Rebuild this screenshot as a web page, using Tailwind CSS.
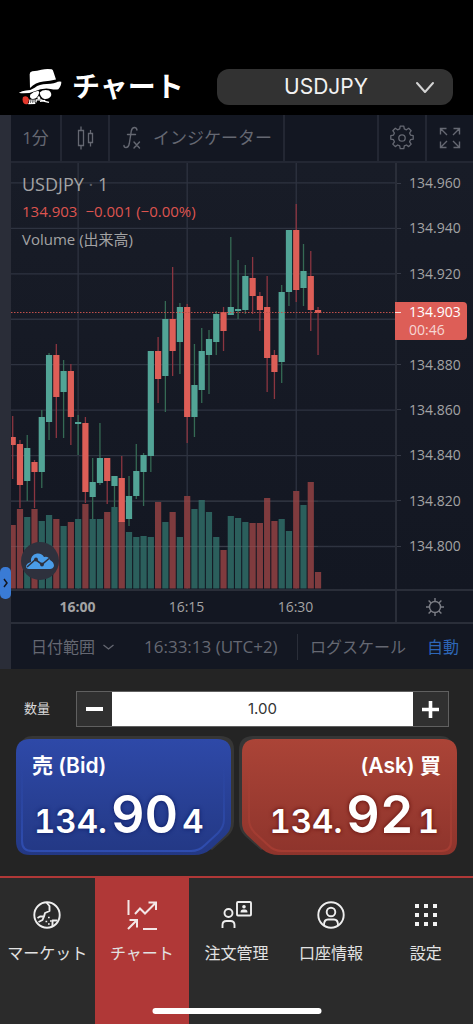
<!DOCTYPE html>
<html lang="ja">
<head>
<meta charset="utf-8">
<meta name="viewport" content="width=device-width, initial-scale=1">
<title>チャート - USDJPY</title>
<script src="https://cdn.jsdelivr.net/npm/@tailwindcss/browser@4"></script>
</head>
<body class="flex min-h-screen flex-col bg-black font-['Inter','Noto_Sans_CJK_JP',sans-serif] text-white">

<header class="flex items-center bg-black pt-[69px] pr-5 pb-[10px] pl-[19px]">
  <svg class="h-9 w-[43px] shrink-0" viewBox="57 56 129 112" preserveAspectRatio="none" aria-hidden="true">
    <path fill="#fff" d="M90 115 L89 72 Q89 65 97 63 Q112 62 124 58 Q140 55 155 57 Q159 58 160 64 L168 89 Q150 94 130 95 Q106 98 90 115Z"/>
    <path fill="#fff" d="M57 130 Q66 124 78 123 Q92 123 104 114 Q118 104 140 103 Q166 102 173 96 Q180 94 184 96 Q184 110 175 119 Q166 121 152 118 Q128 114 104 125 Q84 134 58 131Z"/>
    <path fill="#fff" d="M91 135 Q100 127 115 124 Q120 129 114 139 Q108 149 98 149 Q87 147 91 135Z"/>
    <path fill="#fff" d="M119 129 Q130 118 147 123 Q156 130 153 140 Q147 150 134 149 Q121 146 119 129Z"/>
    <path fill="#fff" d="M111 146 L117 139 L122 148 L116 151Z"/>
    <path fill="none" stroke="#fff" stroke-width="4" d="M90 151 L89 164 M96 151 L95 165 M102 151 L102 164 M109 150 L108 160 M85 164 L106 163 M110 152 L124 152 L134 157 L147 160 M120 157 L136 154"/>
    <path fill="#e2382c" d="M69 143 Q76 139 83 143 L87 150 L84 164 Q76 169 70 161 Q66 152 69 143Z"/>
  </svg>
  <h1 class="ml-[10px] text-[28px] leading-9 font-bold whitespace-nowrap">チャート</h1>
  <div class="relative ml-auto w-[236px]">
    <select aria-label="通貨ペア" class="block h-9 w-full appearance-none rounded-xl bg-[#323232] pr-[18px] text-[21px] text-[#f2f2f2] [text-align-last:center]">
      <option>USDJPY</option>
    </select>
    <svg class="pointer-events-none absolute top-[11px] right-[18px] h-[14px] w-5" viewBox="0 0 20 14" fill="none" stroke="#d4d4d4" stroke-width="2" stroke-linecap="round" stroke-linejoin="round"><path d="M2 3l8 9 8-9"/></svg>
  </div>
</header>

<section class="flex bg-[#131722] font-['Open_Sans','Noto_Sans_CJK_JP',sans-serif]">
  <div class="relative w-[11px] shrink-0 bg-[#2a2d38]">
    <button aria-label="パネルを開く" class="absolute bottom-[70px] left-0 flex h-8 w-[11px] items-center justify-center rounded-[5px] bg-[#3a7bd5]">
      <svg class="h-[10px] w-[5px]" viewBox="0 0 5 10" fill="none" stroke="#131722" stroke-width="1.5"><path d="M1 1l3 4-3 4"/></svg>
    </button>
  </div>

  <div class="min-w-0 flex-1">
    <div class="flex h-12 border-b-2 border-[#232733] text-[17px] text-[#656872]">
      <button class="w-[51px] border-r-2 border-[#232733]">1分</button>
      <button aria-label="チャートの種類" class="flex w-12 items-center justify-center border-r-2 border-[#232733]">
        <svg class="h-6 w-[18px]" viewBox="0 0 18 24" fill="none" stroke="#656872" stroke-width="1.3"><path d="M2.500 4.500h5v15h-5zM5 0.500v4M5 19.500v4M12.500 7.500h4v9h-4zM14.500 4v3.500M14.500 16.500v4"/></svg>
      </button>
      <button class="flex w-[175px] items-center border-r-2 border-[#232733] pl-3 whitespace-nowrap">
        <svg class="mr-3 h-6 w-[19px]" viewBox="0 0 19 24" fill="none" stroke="#656872" stroke-width="1.4" stroke-linecap="round"><path d="M15 4Q14.500 1.500 12.500 1.500Q10 1.500 9.300 5L7.300 17.500Q6.500 21.500 4 21.500Q2 21.500 2 19.500M5.500 8.500h8M12 16l5.500 6M17.500 16l-5.500 6"/></svg>
        インジケーター
      </button>
      <div class="flex-1"></div>
      <button aria-label="設定" class="flex w-12 items-center justify-center border-l-2 border-[#232733]">
        <svg class="h-[26px] w-[26px]" viewBox="0 0 26 26" fill="none" stroke="#656872" stroke-width="1.3" stroke-linejoin="round"><circle cx="13" cy="13" r="3.200"/><path d="M11.200 1.200h3.600l.5 2.700 2.100.9 2.300-1.600 2.500 2.500-1.600 2.300.9 2.100 2.700.5v3.600l-2.700.5-.9 2.100 1.600 2.300-2.500 2.500-2.300-1.600-2.100.9-.5 2.700h-3.600l-.5-2.700-2.100-.9-2.300 1.600-2.500-2.500 1.600-2.300-.9-2.100-2.700-.5v-3.600l2.700-.5.9-2.100-1.600-2.300 2.500-2.500 2.300 1.600 2.100-.9z"/></svg>
      </button>
      <button aria-label="全画面" class="flex w-12 items-center justify-center border-l-2 border-[#232733]">
        <svg class="h-[22px] w-[22px]" viewBox="0 0 22 22" fill="none" stroke="#656872" stroke-width="1.4"><path d="M1.500 7.500v-6h6M1.500 1.500l6.500 6.500M14.500 1.500h6v6M20.500 1.500l-6.500 6.500M1.500 14.500v6h6M1.500 20.500l6.500-6.500M14.500 20.500h6v-6M20.500 20.500l-6.500-6.500"/></svg>
      </button>
    </div>

    <div class="flex h-[426px] bg-linear-to-b from-[#181c27] to-[#131722]">
      <div class="relative min-w-0 flex-1">
        <svg id="plot" class="block h-full w-full" role="img" aria-label="USDJPY 1分足チャート"></svg>
        <div class="absolute top-2 left-[11px] text-[#a3a3a4]">
          <h2 class="text-lg leading-[26px]">USDJPY <span class="text-[#5d606b]">·</span> 1</h2>
          <p class="flex gap-2 text-[15px] leading-[28px] text-[#dd544f]"><span>134.903</span><span>−0.001 (−0.00%)</span></p>
          <p class="text-[15px] leading-[28px]">Volume (出来高)</p>
        </div>
        <button aria-label="TradingView" class="absolute bottom-[9px] left-[10px] flex h-[38px] w-[38px] items-center justify-center rounded-full bg-[#2e313d]">
          <svg class="h-4 w-7" viewBox="0 0 28 16"><path fill="#4a9de8" d="M3 16Q0 16 0 13Q1 10 5 9Q4 2 11 0.500Q16 0 18 4Q22 2.500 24 7Q28 9 28 13Q27 16 24 16Z"/><path fill="none" stroke="#2e313d" stroke-width="1.6" d="M1 14L9.500 6.500L16 11.500L23 5.500"/><circle cx="10" cy="6.500" r="1.900" fill="#2e313d"/><circle cx="16" cy="11.500" r="1.900" fill="#2e313d"/></svg>
        </button>
      </div>
      <div class="relative w-[78px] shrink-0 border-l-2 border-[#2a2e39]">
        <ul class="flex h-[404px] flex-col justify-between pt-[10px] pb-[11px] text-sm leading-5 text-[#a3a3a4]">
          <li class="flex items-center gap-2"><span class="h-px w-1 bg-[#363a46]"></span>134.960</li>
          <li class="flex items-center gap-2"><span class="h-px w-1 bg-[#363a46]"></span>134.940</li>
          <li class="flex items-center gap-2"><span class="h-px w-1 bg-[#363a46]"></span>134.920</li>
          <li class="h-5"></li>
          <li class="flex items-center gap-2"><span class="h-px w-1 bg-[#363a46]"></span>134.880</li>
          <li class="flex items-center gap-2"><span class="h-px w-1 bg-[#363a46]"></span>134.860</li>
          <li class="flex items-center gap-2"><span class="h-px w-1 bg-[#363a46]"></span>134.840</li>
          <li class="flex items-center gap-2"><span class="h-px w-1 bg-[#363a46]"></span>134.820</li>
          <li class="flex items-center gap-2"><span class="h-px w-1 bg-[#363a46]"></span>134.800</li>
        </ul>
        <div class="absolute top-[139px] -left-[2px] w-[72px] rounded-r-sm bg-[#dd5e57] py-px text-sm leading-[18px] text-white">
          <p class="flex items-center gap-2"><span class="h-px w-[6px] bg-white/80"></span>134.903</p>
          <p class="pl-[14px] text-white/75">00:46</p>
        </div>
      </div>
    </div>

    <div class="flex h-[33px] border-t-2 border-[#2a2e39] text-sm text-[#a3a3a4]">
      <div class="flex min-w-0 flex-1 items-center pl-3">
        <span class="w-[109px] text-center font-bold">16:00</span>
        <span class="w-[109px] text-center">16:15</span>
        <span class="w-[109px] text-center">16:30</span>
      </div>
      <button aria-label="スケール設定" class="flex w-[78px] items-center justify-center border-l-2 border-[#2a2e39]">
        <svg class="h-[18px] w-[18px]" viewBox="0 0 18 18" fill="none" stroke="#7b7d85" stroke-width="1.400"><circle cx="9" cy="9" r="5.500"/><path d="M9 0v3.500M9 14.500v3.500M0 9h3.500M14.500 9h3.500M2.600 2.600l2.500 2.500M12.900 12.900l2.500 2.500M2.600 15.400l2.500-2.500M12.900 5.100l2.500-2.500"/></svg>
      </button>
    </div>

    <div class="flex h-[47px] items-center border-t-2 border-[#2a2e39] pr-[14px] pl-5 text-base whitespace-nowrap text-[#656872]">
      <button class="flex items-center gap-2">日付範囲
        <svg class="h-2 w-[11px]" viewBox="0 0 11 8" fill="none" stroke="#656872" stroke-width="1.300"><path d="M.5 2l5 4 5-4"/></svg>
      </button>
      <button class="ml-[30px] text-[17px]">16:33:13 (UTC+2)</button>
      <span class="ml-auto h-[26px] w-px bg-[#2a2e39]"></span>
      <button class="ml-3">ログスケール</button>
      <button class="ml-[21px] text-[#2d66b8]">自動</button>
    </div>
  </div>
</section>

<section class="bg-[#242424] pt-[22px] pb-[21px]">
  <div class="flex items-center pr-6 pl-6">
    <label for="qty" class="w-[52px] text-[13px] text-[#d8d8d8]">数量</label>
    <div class="flex h-9 min-w-0 flex-1 border border-[#606060]">
      <button aria-label="減らす" class="flex w-[35px] shrink-0 items-center justify-center bg-[#303030]"><span class="h-1 w-[17px] bg-white"></span></button>
      <input id="qty" type="text" inputmode="decimal" value="1.00" class="min-w-0 flex-1 bg-white text-center text-[15px] text-[#333]">
      <button aria-label="増やす" class="flex w-[35px] shrink-0 items-center justify-center bg-[#303030]"><svg class="h-[17px] w-[17px]" viewBox="0 0 17 17" stroke="#fff" stroke-width="3.600"><path d="M8.500 0v17M0 8.500h17"/></svg></button>
    </div>
  </div>

  <div class="mt-3 grid grid-cols-2 gap-[11px] px-4">
    <button class="relative h-[116px] text-left">
      <svg class="absolute inset-0 h-full w-full overflow-visible" viewBox="0 0 215 116" preserveAspectRatio="none" aria-hidden="true">
        <defs>
          <linearGradient id="bid" x1="0" y1="0" x2="0" y2="1"><stop offset="0" stop-color="#2e49a8"/><stop offset="1" stop-color="#233884"/></linearGradient>
          <linearGradient id="bidEdge" x1="0" y1="0" x2="0" y2="1"><stop offset="0.2" stop-color="#2f4fb4" stop-opacity="0"/><stop offset="1" stop-color="#2f4db0"/></linearGradient>
        </defs>
        <path fill="#363636" d="M2 10Q6-3 16-3H204Q218-3 218 11V83Q218 91 212 97L196 111Z"/>
        <path fill="url(#bid)" d="M0 14Q0 0 14 0H201Q215 0 215 14V84Q215 91 210 96L195 110Q188 116 178 116H14Q0 116 0 102Z"/>
        <path fill="none" stroke="url(#bidEdge)" stroke-width="2" d="M6 16Q6 6 16 6H198Q208 6 208 16V80Q208 88 202 94L189 106Q183 112 175 112H16Q6 112 6 102Z"/>
      </svg>
      <span class="relative flex h-full flex-col justify-between px-4 pt-[13px] pb-3 whitespace-nowrap">
        <span class="text-[21px] leading-7 font-semibold">売 (Bid)</span>
        <span class="flex items-baseline gap-1 pl-[2px] text-[33px] leading-[44px] font-semibold tabular-nums text-shadow-[0_0_4px_#0b1a60]"><span>134.</span><span class="text-[52px]">90</span><span>4</span></span>
      </span>
    </button>
    <button class="relative h-[116px] text-right">
      <svg class="absolute inset-0 h-full w-full overflow-visible" viewBox="0 0 215 116" preserveAspectRatio="none" aria-hidden="true">
        <defs>
          <linearGradient id="ask" x1="0" y1="0" x2="0" y2="1"><stop offset="0" stop-color="#ab4437"/><stop offset="1" stop-color="#8e342c"/></linearGradient>
          <linearGradient id="askEdge" x1="0" y1="0" x2="0" y2="1"><stop offset="0.2" stop-color="#b04538" stop-opacity="0"/><stop offset="1" stop-color="#a53c32"/></linearGradient>
        </defs>
        <path fill="#363636" d="M213 10Q209-3 199-3H11Q-3-3-3 11V83Q-3 91 3 97L19 111Z"/>
        <path fill="url(#ask)" d="M215 14Q215 0 201 0H14Q0 0 0 14V84Q0 91 5 96L20 110Q27 116 37 116H201Q215 116 215 102Z"/>
        <path fill="none" stroke="url(#askEdge)" stroke-width="2" d="M209 16Q209 6 199 6H17Q7 6 7 16V80Q7 88 13 94L26 106Q32 112 40 112H199Q209 112 209 102Z"/>
      </svg>
      <span class="relative flex h-full flex-col justify-between px-4 pt-[13px] pb-3 whitespace-nowrap">
        <span class="text-[21px] leading-7 font-semibold">(Ask) 買</span>
        <span class="flex items-baseline justify-end gap-1 pr-[2px] text-[33px] leading-[44px] font-semibold tabular-nums text-shadow-[0_0_4px_#5a0b08]"><span>134.</span><span class="text-[52px]">92</span><span>1</span></span>
      </span>
    </button>
  </div>
</section>

<nav class="relative grid min-h-[148px] flex-1 grid-cols-5 border-t-2 border-[#b03837] bg-[#2b2b2b] text-base text-[#e2e2e2]">
  <a href="#" class="flex flex-col items-center pt-[21px] whitespace-nowrap">
    <svg class="h-8 w-8" viewBox="0 0 32 32" fill="none" stroke="#eee" stroke-width="1.900" stroke-linejoin="round"><circle cx="16" cy="16" r="12.700"/><path d="M15.500 3.500l3 3.500v5l-4.500 2-1 3.500h-4l-2.500 1.500M13 17.500l-1.500 3.500-4 2M26.500 21.500h-5v6"/><path stroke-width="1.700" d="M17 18.500h1.700M19 22h1.700M14.500 22.500h1.700M17 25h1.700"/></svg>
    <span class="mt-[10px] leading-6">マーケット</span>
  </a>
  <a href="#" aria-current="page" class="flex flex-col items-center bg-[#b03837] pt-[21px] whitespace-nowrap">
    <svg class="h-8 w-8" viewBox="0 0 32 32" fill="none" stroke="#f3e6e6" stroke-width="2"><path d="M2.500 1v15M9 15l5-5.500 5 5 10-10M22.500 3.500h7.500v7.500M2 30l8.500-8.500M3.500 21h7.500v7.500M17 30h14"/></svg>
    <span class="mt-[10px] leading-6">チャート</span>
  </a>
  <a href="#" class="flex flex-col items-center pt-[21px] whitespace-nowrap">
    <svg class="h-8 w-8" viewBox="0 0 32 32" fill="none" stroke="#eee" stroke-width="1.900"><circle cx="8.500" cy="14" r="4"/><path d="M2.500 29v-3q0-4 4-4h4q4 0 4 4v3"/><rect x="17" y="3" width="14" height="13.500" rx="1"/><g fill="#eee" stroke="none"><circle cx="24" cy="7.800" r="1.800"/><path d="M20.500 13.500q0-3 2.500-3h2q2.500 0 2.500 3z"/></g></svg>
    <span class="mt-[10px] leading-6">注文管理</span>
  </a>
  <a href="#" class="flex flex-col items-center pt-[21px] whitespace-nowrap">
    <svg class="h-8 w-8" viewBox="0 0 32 32" fill="none" stroke="#eee" stroke-width="1.900"><circle cx="16" cy="16" r="12.700"/><circle cx="16" cy="13" r="4.300"/><path d="M9 26q0-5.500 4-5.500h6q4 0 4 5.500"/></svg>
    <span class="mt-[10px] leading-6">口座情報</span>
  </a>
  <a href="#" class="flex flex-col items-center pt-[21px] whitespace-nowrap">
    <svg class="h-8 w-8" viewBox="0 0 32 32" fill="#f3f3f3"><path d="M5 5h4v4H5zM14 5h4v4h-4zM23 5h4v4h-4zM5 14h4v4H5zM14 14h4v4h-4zM23 14h4v4h-4zM5 23h4v4H5zM14 23h4v4h-4zM23 23h4v4h-4z"/></svg>
    <span class="mt-[10px] leading-6">設定</span>
  </a>
  <div class="absolute bottom-[10px] left-1/2 h-[6px] w-[169px] -translate-x-1/2 rounded-full bg-white"></div>
</nav>

<script>
// Each bar: [rising, bodyTop, bodyBottom, wickTop, wickBottom, volumeTop]
const bars = [
  [0,274,282,253,316,362],[0,281,322,277,345,346],[1,285,318,272,338,354],[0,299,309,297,345,346],
  [1,254,309,247,325,358],[1,192,259,190,277,352],[0,192,234,181,275,356],[1,208,229,197,275,363],
  [0,208,254,201,282,359],[1,259,261,252,292,356],[0,260,329,254,340,341],[1,319,334,295,356,356],
  [1,295,320,260,322,356],[0,295,318,295,341,349],[1,313,323,313,344,344],[0,315,359,293,359,358],
  [1,333,356,313,363,369],[1,308,333,281,336,374],[1,292,309,290,343,373],[1,188,293,188,309,374],
  [0,188,216,174,240,339],[1,156,213,138,249,359],[0,156,188,104,213,349],[1,144,179,140,211,374],
  [0,144,254,141,280,333],[1,222,254,181,274,346],[1,188,227,165,240,337],[1,176,192,167,231,349],
  [1,151,179,148,192,374],[0,149,168,144,188,387],[1,144,152,74,152,353],[1,146,148,97,156,355],
  [1,113,147,102,151,359],[0,115,133,94,151,360],[0,133,147,129,168,360],[0,144,195,113,229,335],
  [0,192,209,187,236,358],[1,129,199,122,220,356],[1,67,129,67,143,368],[0,67,127,41,139,328],
  [1,108,125,81,143,342],[0,113,147,88,168,319],[0,147,150,144,192,409]
];
const svg = document.getElementById('plot');
const add = (tag, attrs) => {
  const el = document.createElementNS('http://www.w3.org/2000/svg', tag);
  for (const k in attrs) el.setAttribute(k, attrs[k]);
  svg.appendChild(el);
};
const step = 7.27, half = 3.1, floor = 425.5;
const cx = i => 1.7 + i * step;
for (let i = 0; i < 9; i++) {
  const y = 19.9 + i * 45.45;
  add('line', {x1: 0, x2: '100%', y1: y, y2: y, stroke: '#2e3340', 'stroke-width': 1.3});
}
for (const i of [9, 24, 39]) add('line', {x1: cx(i), x2: cx(i), y1: 0, y2: '100%', stroke: '#2e3340', 'stroke-width': 1.3});
bars.forEach((b, i) => add('rect', {x: cx(i) - half, y: b[5], width: half * 2, height: floor - b[5], fill: b[0] ? '#2b5f5c' : '#7f3b3e'}));
for (let i = 7; i < 9; i++) {
  const y = 19.9 + i * 45.45;
  add('line', {x1: 0, x2: 307, y1: y, y2: y, stroke: '#ffffff', 'stroke-opacity': 0.06, 'stroke-width': 1});
}
bars.forEach((b, i) => {
  add('line', {x1: cx(i), x2: cx(i), y1: b[3], y2: b[4], stroke: b[0] ? '#356a54' : '#8b3540', 'stroke-width': 1.3});
  add('rect', {x: cx(i) - half, y: b[1], width: half * 2, height: b[2] - b[1], fill: b[0] ? '#52a496' : '#dd5e57'});
});
add('line', {x1: 0, x2: '100%', y1: 149.5, y2: 149.5, stroke: '#c0504b', 'stroke-width': 1, 'stroke-dasharray': '1.5 1.5'});
</script>
</body>
</html>
